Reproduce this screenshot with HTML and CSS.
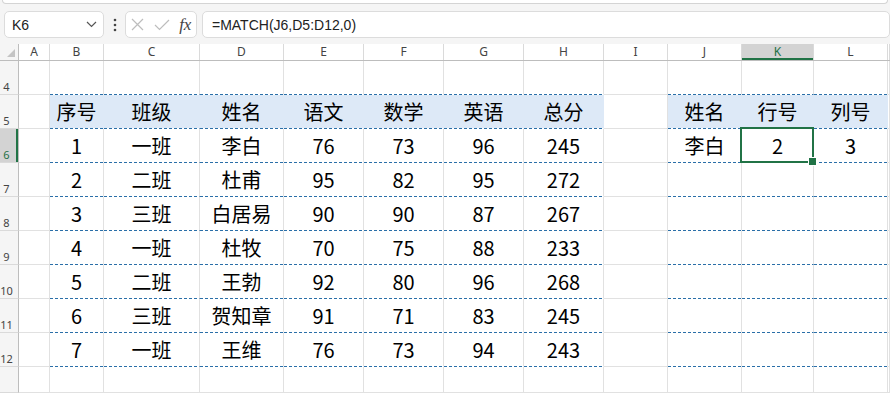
FILE: index.html
```html
<!DOCTYPE html>
<html lang="zh">
<head>
<meta charset="utf-8">
<title>Sheet</title>
<link rel="stylesheet" href="styles.css">
</head>
<body>
<div class="top">
  <div class="ribbon"></div>
  <div class="bar">
    <div class="namebox">
      <span class="ref">K6</span>
      <svg class="chev" width="11" height="7" viewBox="0 0 11 7"><path d="M1 1 L5.5 5.5 L10 1" fill="none" stroke="#555" stroke-width="1.2"/></svg>
    </div>
    <div class="kebab">
      <svg width="4" height="14" viewBox="0 0 4 14"><circle cx="2" cy="2" r="1.3" fill="#444"/><circle cx="2" cy="7" r="1.3" fill="#444"/><circle cx="2" cy="12" r="1.3" fill="#444"/></svg>
    </div>
    <div class="fxbox">
      <svg class="cancel" width="13" height="13" viewBox="0 0 13 13"><path d="M1 1 L12 12 M12 1 L1 12" fill="none" stroke="#bdbdbd" stroke-width="1.2"/></svg>
      <svg class="enter" width="16" height="12" viewBox="0 0 16 12"><path d="M1 6 L5.5 10.5 L15 1" fill="none" stroke="#bdbdbd" stroke-width="1.2"/></svg>
      <span class="fx">fx</span>
    </div>
    <div class="formula">=MATCH(J6,D5:D12,0)</div>
  </div>
</div>

<div class="sheet">
  <div class="row colhdr">
    <div class="corner"><svg width="8" height="8" viewBox="0 0 8 8"><polygon points="8,0 8,8 0,8" fill="#c4c4c4"/></svg></div>
    <div class="ch">A</div><div class="ch">B</div><div class="ch">C</div><div class="ch">D</div><div class="ch">E</div><div class="ch">F</div><div class="ch">G</div><div class="ch">H</div><div class="ch">I</div><div class="ch">J</div><div class="ch on">K</div><div class="ch">L</div><div class="ch"></div>
  </div>

  <div class="row">
    <div class="rh">4</div>
    <div class="c"></div><div class="c dash"></div><div class="c dash"></div><div class="c dash"></div><div class="c dash"></div><div class="c dash"></div><div class="c dash"></div><div class="c dash"></div><div class="c"></div><div class="c dash"></div><div class="c dash"></div><div class="c dash"></div><div class="c"></div>
  </div>

  <div class="row">
    <div class="rh">5</div>
    <div class="c"></div><div class="c hd">序号</div><div class="c hd">班级</div><div class="c hd">姓名</div><div class="c hd">语文</div><div class="c hd">数学</div><div class="c hd">英语</div><div class="c hd">总分</div><div class="c"></div><div class="c hd">姓名</div><div class="c hd">行号</div><div class="c hd">列号</div><div class="c"></div>
  </div>

  <div class="row">
    <div class="rh on">6</div>
    <div class="c"></div><div class="c dash">1</div><div class="c dash">一班</div><div class="c dash">李白</div><div class="c dash">76</div><div class="c dash">73</div><div class="c dash">96</div><div class="c dash">245</div><div class="c"></div><div class="c dash">李白</div><div class="c dash sel">2</div><div class="c dash">3</div><div class="c"></div>
  </div>

  <div class="row">
    <div class="rh">7</div>
    <div class="c"></div><div class="c dash">2</div><div class="c dash">二班</div><div class="c dash">杜甫</div><div class="c dash">95</div><div class="c dash">82</div><div class="c dash">95</div><div class="c dash">272</div><div class="c"></div><div class="c dash"></div><div class="c dash"></div><div class="c dash"></div><div class="c"></div>
  </div>

  <div class="row">
    <div class="rh">8</div>
    <div class="c"></div><div class="c dash">3</div><div class="c dash">三班</div><div class="c dash">白居易</div><div class="c dash">90</div><div class="c dash">90</div><div class="c dash">87</div><div class="c dash">267</div><div class="c"></div><div class="c dash"></div><div class="c dash"></div><div class="c dash"></div><div class="c"></div>
  </div>

  <div class="row">
    <div class="rh">9</div>
    <div class="c"></div><div class="c dash">4</div><div class="c dash">一班</div><div class="c dash">杜牧</div><div class="c dash">70</div><div class="c dash">75</div><div class="c dash">88</div><div class="c dash">233</div><div class="c"></div><div class="c dash"></div><div class="c dash"></div><div class="c dash"></div><div class="c"></div>
  </div>

  <div class="row">
    <div class="rh">10</div>
    <div class="c"></div><div class="c dash">5</div><div class="c dash">二班</div><div class="c dash">王勃</div><div class="c dash">92</div><div class="c dash">80</div><div class="c dash">96</div><div class="c dash">268</div><div class="c"></div><div class="c dash"></div><div class="c dash"></div><div class="c dash"></div><div class="c"></div>
  </div>

  <div class="row">
    <div class="rh">11</div>
    <div class="c"></div><div class="c dash">6</div><div class="c dash">三班</div><div class="c dash">贺知章</div><div class="c dash">91</div><div class="c dash">71</div><div class="c dash">83</div><div class="c dash">245</div><div class="c"></div><div class="c dash"></div><div class="c dash"></div><div class="c dash"></div><div class="c"></div>
  </div>

  <div class="row">
    <div class="rh">12</div>
    <div class="c"></div><div class="c dash">7</div><div class="c dash">一班</div><div class="c dash">王维</div><div class="c dash">76</div><div class="c dash">73</div><div class="c dash">94</div><div class="c dash">243</div><div class="c"></div><div class="c dash"></div><div class="c dash"></div><div class="c dash"></div><div class="c"></div>
  </div>

  <div class="row last">
    <div class="rh"></div>
    <div class="c"></div><div class="c"></div><div class="c"></div><div class="c"></div><div class="c"></div><div class="c"></div><div class="c"></div><div class="c"></div><div class="c"></div><div class="c"></div><div class="c"></div><div class="c"></div><div class="c"></div>
  </div>
</div>
</body>
</html>
```

FILE: styles.css
```css
* { box-sizing: border-box; margin: 0; padding: 0; }
html, body { width: 890px; height: 393px; overflow: hidden; background: #fff; }
body { font-family: "Noto Sans", "Liberation Sans", sans-serif; color: #000; }

.top { height: 44px; background: #f5f5f5; }
.ribbon {
  height: 4px; margin: 0 2px; background: #fff;
  border: 1px solid #d4d4d4; border-top: none;
  border-radius: 0 0 6px 6px;
}
.bar { display: flex; align-items: stretch; padding: 7px 0 0 4px; height: 34px; }

.namebox {
  width: 102px; height: 27px; background: #fff;
  border: 1px solid #dcdcdc; border-radius: 5px;
  display: flex; align-items: center; justify-content: space-between;
  padding: 0 6px 0 7px;
}
.ref { font: 14px "Liberation Sans", Arial, sans-serif; color: #222; }
.chev { display: block; }

.kebab { width: 21px; display: flex; align-items: center; justify-content: center; height: 27px; }

.fxbox {
  width: 73px; height: 27px; background: #fff;
  border: 1px solid #dcdcdc; border-radius: 5px;
  display: flex; align-items: center; padding: 0 0 0 5px;
}
.cancel { margin-right: 10px; }
.enter { margin-right: 9px; }
.fx { font: italic 17px "Liberation Serif", "DejaVu Serif", serif; color: #444; line-height: 1; }

.formula {
  margin-left: 5px; width: 700px; height: 27px; background: #fff;
  border: 1px solid #dcdcdc; border-radius: 5px;
  display: flex; align-items: center; padding-left: 9px;
  font: 14px "Liberation Sans", Arial, sans-serif; color: #222;
}

.sheet { display: flex; flex-direction: column; }
.row {
  display: grid;
  grid-template-columns: 19px 31px 54px 96px 84px 80px 80px 80px 80px 64px 74px 72px 74px 1fr;
  height: 34px;
}
.row.last { height: 26px; }

.colhdr { height: 17px; background: #fff; border-bottom: 1px solid #bdbdbd; }
.corner { border-right: 1px solid #bdbdbd; display: flex; align-items: flex-end; justify-content: flex-end; padding: 0 3px 3px 0; background: #f5f5f5; }
.ch {
  border-right: 1px solid #dadada;
  display: flex; align-items: center; justify-content: center;
  font-size: 12px; color: #444; line-height: 1;
}
.ch.on { background: #d3d3d3; color: #1e7145; box-shadow: inset 0 -2px 0 #217346; }

.rh {
  background: #f5f5f5; border-right: 1px solid #bdbdbd; border-bottom: 1px solid #dadada;
  display: flex; align-items: flex-end; justify-content: center;
  padding: 0 5px 1px 0;
  font-size: 11px; color: #444; line-height: 1.2;
}
.rh.on { background: #d3d3d3; color: #1e7145; box-shadow: inset -2px 0 0 #217346; }

.c {
  border-right: 1px solid #e1e1e1; border-bottom: 1px solid #e1e1e1;
  display: flex; align-items: center; justify-content: center;
  font: 20px "Noto Sans CJK SC", "Noto Sans", sans-serif; color: #000; line-height: 1;
}
.dash {
  border-bottom-color: transparent;
  background-image: repeating-linear-gradient(90deg, #2a6fa8 0 3px, transparent 3px 5px);
  background-size: 100% 1px; background-repeat: no-repeat;
  background-position: left bottom; background-origin: border-box;
}
.hd {
  border-bottom-color: transparent; border-right-color: #dde9f7;
  background-color: #dde9f7;
  background-image: repeating-linear-gradient(90deg, #2a6fa8 0 3px, #fff 3px 5px);
  background-size: 100% 1px; background-repeat: no-repeat;
  background-position: left bottom; background-origin: border-box;
}

.sel { position: relative; }
.sel::before {
  content: ""; position: absolute; left: -2px; top: -2px; right: -1px; bottom: -1px;
  border: 2px solid #217346;
}
.sel::after {
  content: ""; position: absolute; right: -4px; bottom: -4px; width: 7px; height: 7px;
  background: #217346; border: 1px solid #fff;
}
```
